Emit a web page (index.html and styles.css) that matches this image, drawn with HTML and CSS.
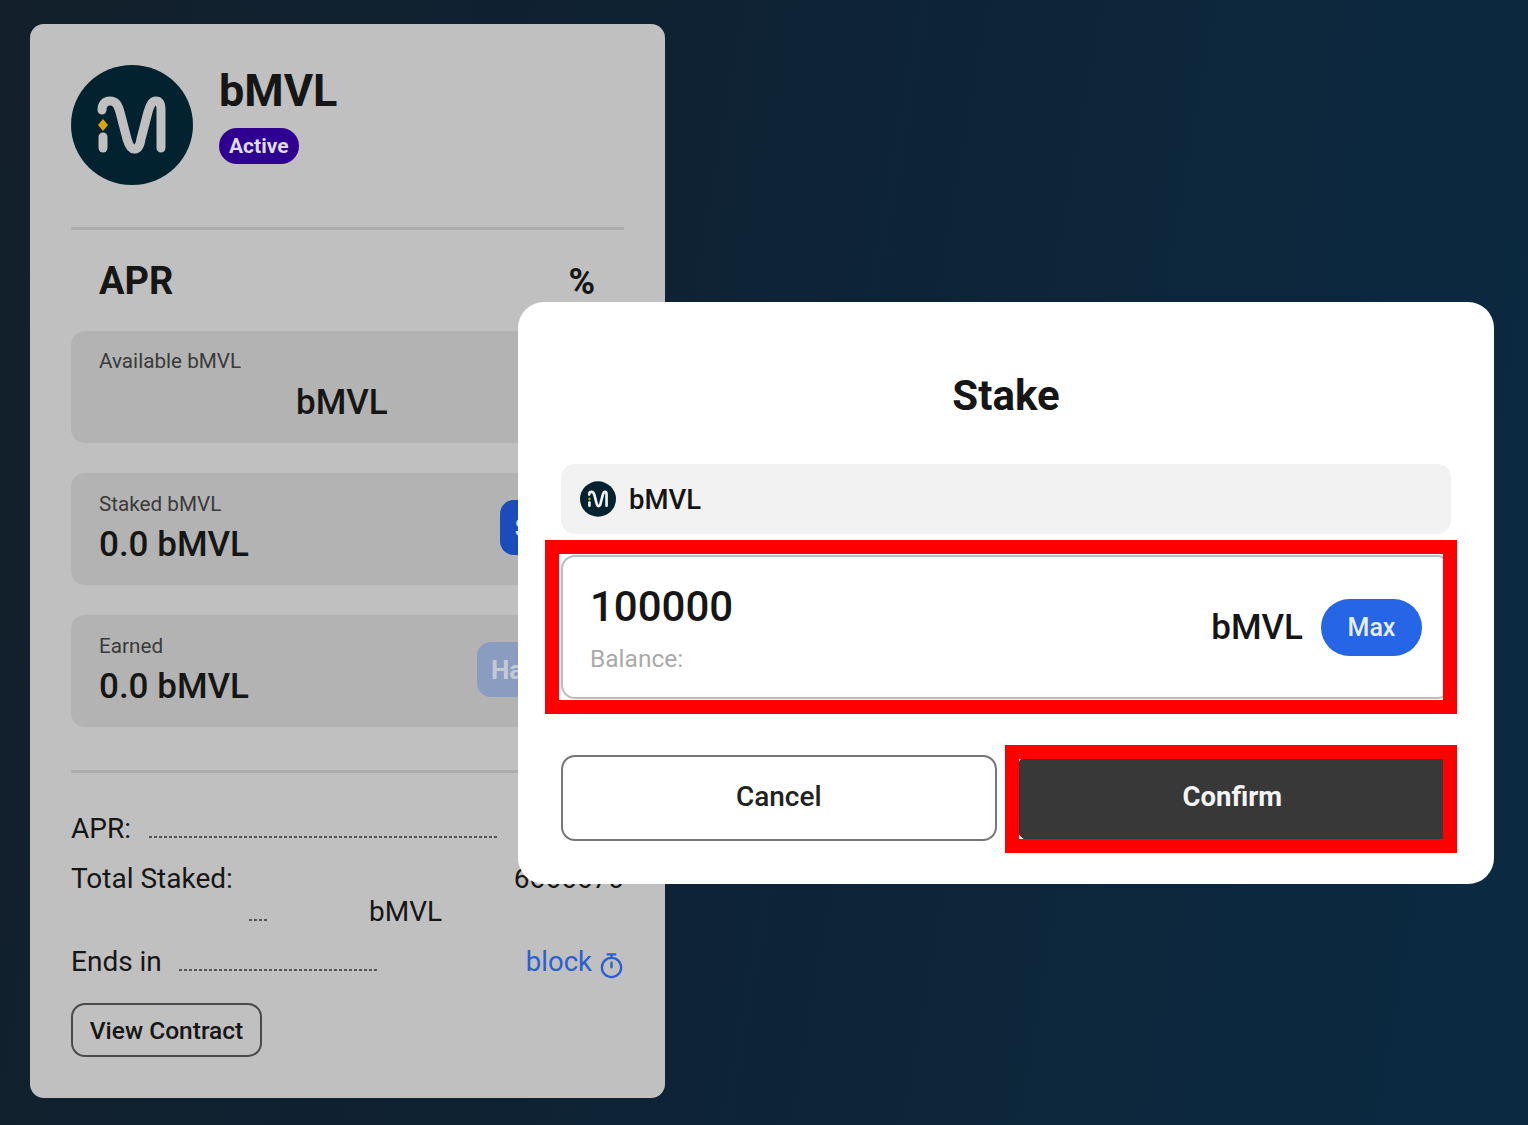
FILE: index.html
```html
<!DOCTYPE html>
<html lang="en">
<head>
    <meta charset="UTF-8">
    <title>Stake bMVL</title>
    <link rel="stylesheet" href="styles.css">
</head>
<body>
    <div class="pool-card">
        <div class="pool-head">
            <svg class="logo-big" viewBox="0 0 122 120">
                <ellipse cx="61" cy="60" rx="61" ry="60" fill="#02222f"/>
                <path d="M31 45C31 39 34 36 39 36C45 36 47 40 49 47L56 74C58 81 60 84 63 84C67 84 69 81 70 74L77 47C79 40 81 36 85 36C89 36 90 40 90 45V83" fill="none" stroke="#c0c0c0" stroke-width="9" stroke-linecap="round"/>
                <path d="M32 72V83" fill="none" stroke="#c0c0c0" stroke-width="9" stroke-linecap="round"/>
                <path d="M32 54L37 60L32 66L27 60Z" fill="#d9a514"/>
            </svg>
            <div>
                <h2 class="pool-name">bMVL</h2>
                <span class="badge">Active</span>
            </div>
        </div>

        <div class="apr-row">
            <span>APR</span>
            <span class="apr-pct">%</span>
        </div>

        <div class="panel">
            <div class="panel-label">Available bMVL</div>
            <div class="panel-value indent">bMVL</div>
        </div>
        <div class="panel panel-btn">
            <div>
                <div class="panel-label">Staked bMVL</div>
                <div class="panel-value">0.0 bMVL</div>
            </div>
            <button class="btn-blue">Stake</button>
        </div>
        <div class="panel panel-btn">
            <div>
                <div class="panel-label">Earned</div>
                <div class="panel-value">0.0 bMVL</div>
            </div>
            <button class="btn-faded">Harvest</button>
        </div>

        <div class="info">
            <div class="info-row">
                <span>APR:</span>
                <span class="dots dots-apr"></span>
            </div>
            <div class="info-row info-total">
                <span>Total Staked:</span>
                <span>6666670</span>
            </div>
            <div class="info-row info-unit">
                <span class="dots dots-short"></span>
                <span>bMVL</span>
            </div>
            <div class="info-row info-ends">
                <span>Ends in</span>
                <span class="dots dots-ends"></span>
                <span class="block-link">block
                    <svg class="timer" viewBox="0 0 26 28" fill="none" stroke="#2a5fd0" stroke-width="2.400" stroke-linecap="round">
                        <circle cx="13" cy="16" r="10"/>
                        <path d="M9 2.500H17M13 3V6M13 11V16"/>
                    </svg>
                </span>
            </div>
        </div>

        <button class="btn-contract">View Contract</button>
    </div>

    <!-- Stake dialog -->
    <div class="modal">
        <h2 class="modal-title">Stake</h2>

        <div class="token-row">
            <svg class="logo-small" viewBox="0 0 122 120">
                <ellipse cx="61" cy="60" rx="61" ry="60" fill="#02222f"/>
                <path d="M31 45C31 39 34 36 39 36C45 36 47 40 49 47L56 74C58 81 60 84 63 84C67 84 69 81 70 74L77 47C79 40 81 36 85 36C89 36 90 40 90 45V83" fill="none" stroke="#f2f2f2" stroke-width="9" stroke-linecap="round"/>
                <path d="M32 72V83" fill="none" stroke="#f2f2f2" stroke-width="9" stroke-linecap="round"/>
                <path d="M32 54L37 60L32 66L27 60Z" fill="#d9a514"/>
            </svg>
            <span>bMVL</span>
        </div>

        <div class="amount-box">
            <div>
                <div class="amount">100000</div>
                <div class="balance">Balance:</div>
            </div>
            <div class="amount-right">
                <span class="amount-unit">bMVL</span>
                <button class="btn-max">Max</button>
            </div>
        </div>

        <div class="modal-actions">
            <button class="btn-cancel">Cancel</button>
            <button class="btn-confirm">Confirm</button>
        </div>

        <div class="mark mark-amount"></div>
        <div class="mark mark-confirm"></div>
    </div>
</body>
</html>
```

FILE: styles.css
```css
* {
    box-sizing: border-box;
}

html, body {
    height: 100%;
}

body {
    margin: 0;
    padding: 24px 0 0 30px;
    overflow: hidden;
    font-family: Roboto, "Liberation Sans", sans-serif;
    color: #161616;
    background: linear-gradient(100deg, #13202b 0%, #0e2233 40%, #0b2a42 100%);
}

button {
    font-family: inherit;
    cursor: pointer;
}

.pool-card {
    width: 635px;
    height: 1074px;
    padding: 41px 41px 0;
    background-color: #c0c0c0;
    border-radius: 14px;
}

.pool-head {
    display: flex;
    gap: 26px;
    height: 165px;
    border-bottom: 3px solid #adadad;
}

.logo-big {
    width: 122px;
    height: 120px;
}

.pool-name {
    margin: 0 0 11px;
    font-size: 45px;
    line-height: 52px;
    font-weight: 700;
}

.badge {
    display: inline-block;
    padding: 0 10px;
    height: 36px;
    line-height: 36px;
    font-size: 21px;
    font-weight: 700;
    color: #dcdcec;
    background-color: #2f0090;
    border-radius: 18px;
}

.apr-row {
    display: flex;
    justify-content: space-between;
    align-items: center;
    height: 101px;
    padding: 0 29px 0 28px;
    font-size: 38px;
    font-weight: 700;
}

.apr-pct {
    font-size: 36px;
    padding-top: 2px;
}

.panel {
    height: 112px;
    margin-bottom: 30px;
    padding: 16px 28px 0;
    background-color: #b3b3b3;
    border-radius: 14px;
}

.panel-btn {
    display: flex;
    justify-content: space-between;
    align-items: center;
    padding-top: 0;
    padding-bottom: 3px;
}

.panel-label {
    font-size: 20.700px;
    line-height: 28px;
    color: #3a3a3a;
}

.panel-value {
    margin-top: 6px;
    font-size: 35px;
    line-height: 42px;
    font-weight: 500;
}

.indent {
    margin-top: 7px;
    margin-left: 197px;
}

.btn-blue, .btn-faded {
    height: 55px;
    border: none;
    border-radius: 14px;
    font-size: 26px;
    font-weight: 700;
}

.btn-blue {
    width: 96px;
    color: #dde;
    background-color: #1a4dbb;
}

.btn-faded {
    width: 119px;
    color: #c4cad6;
    background-color: #8a9cc0;
}

.info {
    margin-top: 43px;
    padding-top: 39px;
    border-top: 3px solid #adadad;
    font-size: 28px;
}

.info-row {
    display: flex;
    align-items: baseline;
}

.info-total {
    margin-top: 17px;
    justify-content: space-between;
    line-height: 34px;
}

.info-unit {
    margin-top: -1px;
    line-height: 34px;
}

.info-ends {
    margin-top: 16px;
    line-height: 34px;
}

.dots {
    display: inline-block;
    height: 2px;
    background: repeating-linear-gradient(90deg, #555 0 3px, transparent 3px 5px);
}

.dots-apr {
    width: 350px;
    margin-left: 18px;
}

.dots-short {
    width: 18px;
    margin-left: 178px;
    margin-right: 102px;
}

.dots-ends {
    width: 198px;
    margin-left: 17px;
}

.block-link {
    display: flex;
    align-items: center;
    gap: 7px;
    margin-left: auto;
    font-size: 27.500px;
    color: #2a5fd0;
}

.timer {
    width: 25px;
    height: 27px;
    margin-top: 6px;
}

.btn-contract {
    display: block;
    margin-top: 24px;
    width: 191px;
    height: 54px;
    padding: 0;
    font-size: 24.500px;
    font-weight: 500;
    color: #161616;
    background: transparent;
    border: 2px solid #4a4a4a;
    border-radius: 14px;
}

.modal {
    position: absolute;
    left: 518px;
    top: 302px;
    width: 976px;
    height: 582px;
    padding: 0 43px;
    background-color: #fff;
    border-radius: 26px;
}

.modal-title {
    margin: 0;
    padding-top: 69px;
    height: 162px;
    text-align: center;
    font-size: 42px;
    line-height: 50px;
    font-weight: 700;
}

.token-row {
    display: flex;
    align-items: center;
    gap: 13px;
    height: 70px;
    padding-left: 19px;
    font-size: 27.500px;
    font-weight: 500;
    background-color: #f2f2f2;
    border-radius: 14px;
}

.logo-small {
    width: 36px;
    height: 36px;
}

.amount-box {
    display: flex;
    justify-content: space-between;
    align-items: center;
    height: 144px;
    margin-top: 21px;
    padding: 1px 27px 0 27px;
    border: 2px solid #bdbdbd;
    border-radius: 14px;
}

.amount {
    font-size: 42px;
    line-height: 50px;
    font-weight: 500;
}

.balance {
    margin-top: 12px;
    font-size: 24.500px;
    line-height: 30px;
    color: #aaa;
}

.amount-right {
    display: flex;
    align-items: center;
    gap: 18px;
}

.amount-unit {
    font-size: 35px;
    font-weight: 500;
}

.btn-max {
    width: 101px;
    height: 57px;
    border: none;
    border-radius: 29px;
    font-size: 25px;
    font-weight: 500;
    color: #e8effc;
    background-color: #2565e6;
}

.modal-actions {
    display: flex;
    gap: 20px;
    margin-top: 56px;
}

.modal-actions button {
    flex: 1;
    height: 86px;
    padding: 0 0 4px;
    font-size: 28px;
    font-weight: 500;
    border-radius: 14px;
}

.modal-actions .btn-cancel {
    color: #222;
    background-color: #fff;
    border: 2px solid #777;
}

.modal-actions .btn-confirm {
    padding-right: 3px;
    color: #f4f4f4;
    font-weight: 700;
    font-size: 27.500px;
    background-color: #383838;
    border: none;
}

/* red annotation boxes drawn over the dialog */
.mark {
    position: absolute;
    border: 14px solid #f00;
}

.mark-amount {
    left: 27px;
    top: 238px;
    width: 912px;
    height: 174px;
}

.mark-confirm {
    left: 487px;
    top: 443px;
    width: 452px;
    height: 108px;
}
```
